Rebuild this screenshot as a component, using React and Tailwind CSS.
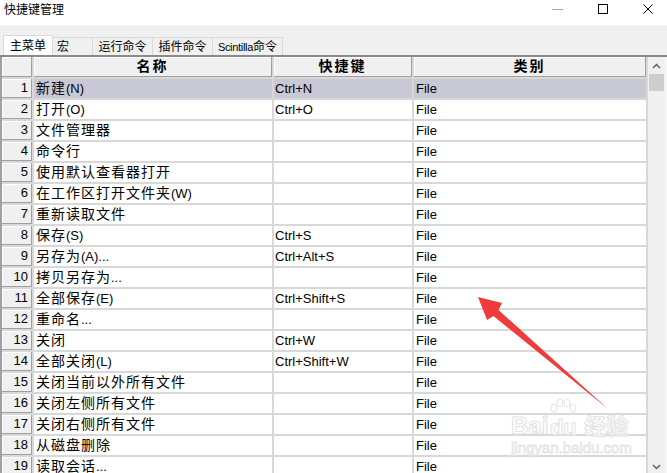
import React from 'react';

const rows = [
  ['新建(N)', 'Ctrl+N'],
  ['打开(O)', 'Ctrl+O'],
  ['文件管理器', ''],
  ['命令行', ''],
  ['使用默认查看器打开', ''],
  ['在工作区打开文件夹(W)', ''],
  ['重新读取文件', ''],
  ['保存(S)', 'Ctrl+S'],
  ['另存为(A)...', 'Ctrl+Alt+S'],
  ['拷贝另存为...', ''],
  ['全部保存(E)', 'Ctrl+Shift+S'],
  ['重命名...', ''],
  ['关闭', 'Ctrl+W'],
  ['全部关闭(L)', 'Ctrl+Shift+W'],
  ['关闭当前以外所有文件', ''],
  ['关闭左侧所有文件', ''],
  ['关闭右侧所有文件', ''],
  ['从磁盘删除', ''],
  ['读取会话...', ''],
];

const tabs = [
  ['主菜单', 'w-[50px] justify-center'],
  ['宏', 'w-[40px] justify-start pl-[4px]'],
  ['运行命令', 'w-[60px] justify-center'],
  ['插件命令', 'w-[60px] justify-center'],
  ['Scintilla命令', 'w-[70px] justify-center'],
];

// CJK runs get the wider spacing seen in the grid
function mixed(text) {
  return text.split(/([\u4e00-\u9fff]+)/).map((part, i) =>
    /[\u4e00-\u9fff]/.test(part) ? (
      <span key={i} className="text-[14px] tracking-[1px]">{part}</span>
    ) : (
      part
    )
  );
}

const raised = 'bg-[#f0f0f0] border-r border-b border-[#a0a0a0] shadow-[inset_1px_1px_0_#ffffff]';

function Watermark() {
  return (
    <div className="absolute left-[511px] top-[398px] flex flex-col items-start pointer-events-none select-none">
      <div className="flex items-end h-[40px]">
        <span className="text-[24px] leading-[24px] font-bold text-white/70 [-webkit-text-stroke:1px_#e2e2e2]">Bai</span>
        <div className="flex flex-col items-center">
          <svg width="30" height="20" viewBox="0 0 30 20">
            <g fill="#ffffff" fillOpacity="0.7" stroke="#e2e2e2" strokeWidth="1">
              <ellipse cx="6" cy="10" rx="3" ry="4" />
              <ellipse cx="12" cy="5" rx="3" ry="4" />
              <ellipse cx="19" cy="5" rx="3" ry="4" />
              <ellipse cx="25" cy="10" rx="3" ry="4" />
            </g>
          </svg>
          <span className="text-[22px] leading-[20px] font-bold text-white/70 [-webkit-text-stroke:1px_#e2e2e2]">du</span>
        </div>
        <span className="ml-[6px] text-[22px] leading-[22px] font-bold text-white/70 [-webkit-text-stroke:1px_#e2e2e2]">经验</span>
      </div>
      <span className="mt-[2px] text-[15px] leading-[16px] text-white/70 [-webkit-text-stroke:0.8px_#e2e2e2]">jingyan.baidu.com</span>
    </div>
  );
}

export default function App() {
  return (
    <div className="relative w-[667px] h-[473px] overflow-hidden bg-[#f0f0f0] text-black [font-family:'Liberation_Sans','Noto_Sans_CJK_SC',sans-serif]">
      {/* title bar */}
      <div className="h-[25px] bg-white flex items-start">
        <div className="pl-[4px] pt-[3px] text-[12px] leading-[14px]">快捷键管理</div>
        <div className="ml-auto mt-[4px] pr-[14px] flex items-center gap-[35px] h-[10px]">
          <div className="w-[11px] h-px bg-[#a8a8a8]" />
          <div className="w-[10px] h-[10px] border border-black" />
          <svg width="10" height="10" viewBox="0 0 10 10">
            <path d="M0.5 0.5 L9.5 9.5 M9.5 0.5 L0.5 9.5" stroke="#000" strokeWidth="1" />
          </svg>
        </div>
      </div>

      {/* tabs */}
      <div className="mt-[10px] h-[20px] pl-[3px] flex items-end">
        {tabs.map(([label, w], i) =>
          i === 0 ? (
            <div key={label} className={`${w} h-[20px] bg-white border border-b-0 border-[#d9d9d9] flex items-center text-[12px] leading-[14px]`}>
              {label}
            </div>
          ) : (
            <div key={label} className={`${w} h-[18px] bg-[#f0f0f0] border-t border-r border-[#d9d9d9] flex items-center text-[12px] leading-[14px]`}>
              {label === 'Scintilla命令' ? (
                <>
                  <span className="text-[11px] tracking-[-0.3px]">Scintilla</span>命令
                </>
              ) : (
                label
              )}
            </div>
          )
        )}
      </div>

      {/* grid + scrollbar */}
      <div className="flex border-t-2 border-[#8a8a8a] h-[418px]">
        <div className="border-l-2 border-[#a0a0a0] bg-[#d8d8d8] pr-[2px]">
          <div className="grid grid-cols-[30px_238px_138px_232px] auto-rows-[19px] grid-rows-[20px] gap-[2px]">
            <div className={raised} />
            <div className={`${raised} flex items-center justify-center text-[14px] font-bold tracking-[2px]`}>名称</div>
            <div className={`${raised} flex items-center justify-center text-[14px] font-bold tracking-[2px]`}>快捷键</div>
            <div className={`${raised} flex items-center justify-center text-[14px] font-bold tracking-[2px]`}>类别</div>
            {rows.map(([name, key], i) => {
              const cell = i === 0 ? 'bg-[#c9c9d6]' : 'bg-white';
              return (
                <React.Fragment key={i}>
                  <div className={`${raised} text-right pr-[3px] text-[13px] leading-[18px]`}>{i + 1}</div>
                  <div className={`${cell} pl-[2px] text-[13px] leading-[19px] whitespace-nowrap`}>{mixed(name)}</div>
                  <div className={`${cell} pl-[1px] text-[13px] leading-[19px] whitespace-nowrap`}>{key}</div>
                  <div className={`${cell} pl-[2px] text-[13px] leading-[19px]`}>File</div>
                </React.Fragment>
              );
            })}
          </div>
        </div>
        <div className="w-[17px] bg-[#f0f0f0] flex flex-col items-center">
          <svg className="mt-[6px]" width="9" height="6" viewBox="0 0 9 6">
            <path d="M1 5 L4.5 1.5 L8 5" fill="none" stroke="#606060" strokeWidth="1.5" />
          </svg>
          <div className="mt-[5px] w-[15px] h-[17px] bg-[#cdcdcd]" />
          <svg className="mt-auto mb-[3px]" width="9" height="6" viewBox="0 0 9 6">
            <path d="M1 1 L4.5 4.5 L8 1" fill="none" stroke="#606060" strokeWidth="1.5" />
          </svg>
        </div>
        <div className="flex-1 bg-[#f7f7f7]" />
      </div>

      {/* red arrow annotation */}
      <svg className="absolute left-0 top-0 pointer-events-none" width="667" height="473" viewBox="0 0 667 473">
        <polygon points="478,297 502,303 498.5,310 608,409 493.5,316 487,320" fill="#ef3b3b" />
      </svg>

      <Watermark />
    </div>
  );
}
